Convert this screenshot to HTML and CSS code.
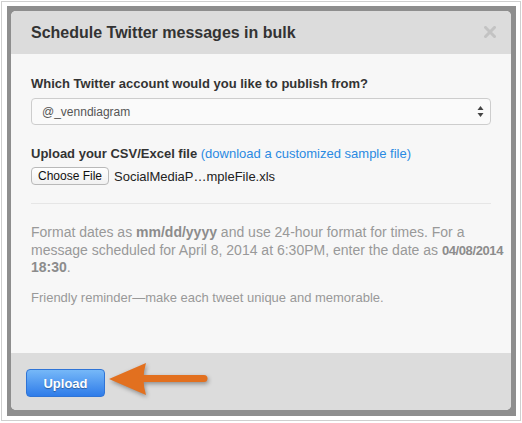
FILE: index.html
```html
<!DOCTYPE html>
<html lang="en">
<head>
    <meta charset="UTF-8">
    <title>Schedule Twitter messages in bulk</title>
    <link rel="stylesheet" href="styles.css">
</head>
<body>

<div class="shot">
    <div class="backdrop">
        <div class="modal">
            <div class="modal-header">
                <h1>Schedule Twitter messages in bulk</h1>
                <svg class="close" width="12" height="12" viewBox="0 0 12 12">
                    <path d="M1.5 1.5 L10.5 10.5 M10.5 1.5 L1.5 10.5" stroke="#c3c3c3" stroke-width="3" stroke-linecap="square"/>
                </svg>
            </div>

            <div class="modal-body">
                <label class="field-label">Which Twitter account would you like to publish from?</label>
                <div class="select">
                    <span>@_venndiagram</span>
                    <svg width="7" height="13" viewBox="0 0 7 13">
                        <path d="M3.5 1 L6.5 5 L0.5 5 Z" fill="#444"/>
                        <path d="M3.5 12 L6.5 8 L0.5 8 Z" fill="#444"/>
                    </svg>
                </div>

                <label class="field-label upload-label">Upload your CSV/Excel file <a href="#">(download a customized sample file)</a></label>
                <div class="file-row">
                    <span class="file-btn">Choose File</span>
                    <span class="file-name">SocialMediaP…mpleFile.xls</span>
                </div>

                <hr class="divider">

                <p class="note">Format dates as <b>mm/dd/yyyy</b> and use 24-hour format for times. For a<br>message scheduled for April 8, 2014 at 6:30PM, enter the date as <b class="date">04/08/2014</b> <b>18:30</b>.</p>
                <p class="note reminder">Friendly reminder—make each tweet unique and memorable.</p>
            </div>

            <div class="modal-footer">
                <button class="upload-btn">Upload</button>
                <!-- annotation arrow drawn over the footer -->
                <svg class="arrow" width="115" height="45" viewBox="0 0 115 45">
                    <path d="M9 21 L46 5 Q41 21 46 37 Z" fill="#e2701f"/>
                    <line x1="42" y1="20.5" x2="104" y2="20.5" stroke="#e2701f" stroke-width="7" stroke-linecap="round"/>
                </svg>
            </div>
        </div>
    </div>
</div>

</body>
</html>
```

FILE: styles.css
```css
body {
    margin: 0;
    background-color: #fff;
    font-family: "Liberation Sans", Arial, sans-serif;
}
.shot {
    width: 520px;
    height: 420px;
    margin: 1px 0 0 1px;
    padding: 4px 4px 4px 5px;
    border: 1px solid #cfcfcf;
    box-sizing: border-box;
}
.backdrop {
    height: 100%;
    padding: 5px 5px 6px 4px;
    box-sizing: border-box;
    background-color: #8e8e8e;
}
.modal {
    height: 100%;
    display: flex;
    flex-direction: column;
    border-radius: 5px;
    overflow: hidden;
    background-color: #f7f7f7;
}
.modal-header {
    height: 43px;
    flex: none;
    display: flex;
    align-items: center;
    justify-content: space-between;
    padding: 0 15px 0 20px;
    background-color: #dcdcdc;
}
.modal-header h1 {
    margin: 0;
    font-size: 16px;
    font-weight: bold;
    color: #333;
}
.close {
    margin-top: -1px;
}
.modal-body {
    flex: 1;
    padding: 21px 20px 0;
}
.field-label {
    display: block;
    font-size: 13px;
    line-height: 18px;
    font-weight: bold;
    color: #333;
}
.field-label a {
    font-weight: normal;
    color: #2a8ae2;
    text-decoration: none;
}
.select {
    margin-top: 5px;
    height: 27px;
    display: flex;
    align-items: center;
    justify-content: space-between;
    padding: 0 6px 0 10px;
    border: 1px solid #cdcdcd;
    border-radius: 4px;
    background-color: #fafafa;
    box-sizing: border-box;
    font-size: 12px;
    color: #555;
}
.upload-label {
    margin-top: 20px;
}
.file-row {
    margin-top: 4px;
    display: flex;
    align-items: center;
    gap: 5px;
}
.file-btn {
    height: 18px;
    width: 78px;
    box-sizing: border-box;
    display: flex;
    align-items: center;
    justify-content: center;
    border: 1px solid #b9b9b9;
    border-radius: 4px;
    background: linear-gradient(#ffffff, #f1f1f1);
    font-size: 12px;
    color: #111;
}
.file-name {
    font-size: 13px;
    color: #222;
}
.divider {
    margin: 18px 0 0;
    border: 0;
    border-top: 1px solid #e6e6e6;
}
.note {
    margin: 20px -16px 0 0;
    font-size: 14px;
    line-height: 17.5px;
    color: #999;
}
.note b {
    color: #8c8c8c;
}
.note .date {
    font-size: 13px;
    letter-spacing: -0.4px;
}
.reminder {
    margin-top: 12px;
    font-size: 13px;
}
.modal-footer {
    position: relative;
    height: 57px;
    flex: none;
    padding: 16px 15px 0;
    box-sizing: border-box;
    background-color: #dcdcdc;
}
.upload-btn {
    width: 79px;
    height: 28px;
    border: 1px solid #2f74d6;
    border-radius: 4px;
    background: linear-gradient(#76b8f8, #2f7ce9);
    font-family: "Liberation Sans", Arial, sans-serif;
    font-size: 13px;
    font-weight: bold;
    color: #fff;
    text-shadow: 0 1px 1px rgba(0,0,0,0.35);
}
.arrow {
    position: absolute;
    left: 89px;
    top: 5px;
    filter: drop-shadow(1px 2px 2px rgba(0,0,0,0.35));
}
```
